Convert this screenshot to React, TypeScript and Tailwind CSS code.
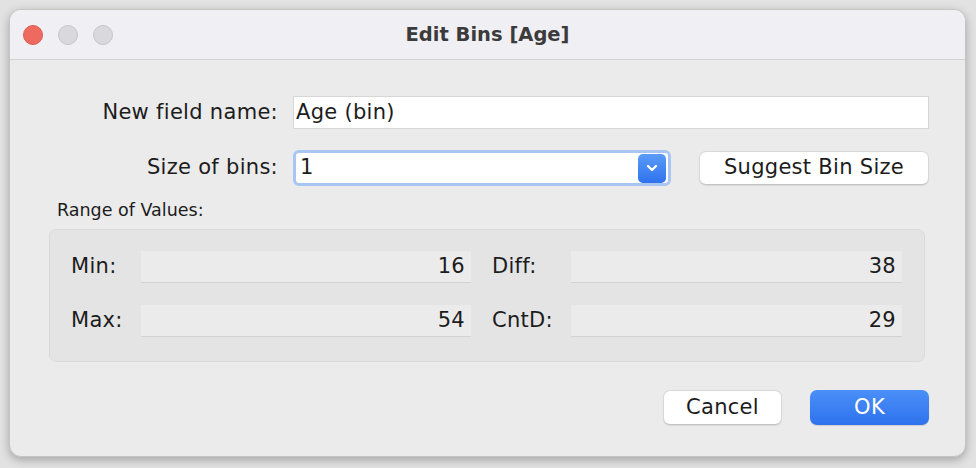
import { ChevronDown } from "lucide-react";

const font = { fontFamily: '"DejaVu Sans", "Liberation Sans", sans-serif' };

function ReadOnlyField({ value }: { value: string }) {
  return (
    <div className="flex h-[33px] flex-1 items-center justify-end rounded-[2px] border border-[#e4e4e4] border-b-[#d2d2d2] bg-[#ebebeb] pr-[6px] text-[21px] text-[#1c1c1c]">
      {value}
    </div>
  );
}

function StatRow({
  left,
  leftValue,
  right,
  rightValue,
}: {
  left: string;
  leftValue: string;
  right: string;
  rightValue: string;
}) {
  return (
    <div className="flex items-center">
      <span className="w-[69px] text-[21px] text-[#1c1c1c]">{left}</span>
      <div className="flex w-[332px]">
        <ReadOnlyField value={leftValue} />
      </div>
      <span className="ml-[20px] w-[78px] text-[21px] text-[#1c1c1c]">{right}</span>
      <div className="flex w-[333px]">
        <ReadOnlyField value={rightValue} />
      </div>
    </div>
  );
}

export default function App() {
  return (
    <div
      className="h-[468px] w-[976px] bg-[#e2e2e2] pb-[11px] pl-[9px] pr-[10px] pt-[9px] tracking-[0.3px]"
      style={font}
    >
      <div className="flex h-full w-full flex-col overflow-hidden rounded-[12px] border border-[#c4c4c4] bg-[#ebebeb] shadow-[0_3px_10px_rgba(0,0,0,0.28)]">
        {/* title bar */}
        <div className="relative flex h-[50px] shrink-0 items-center border-b border-[#d3d3d3] bg-[#f0eff4]">
          <div className="ml-[13px] flex gap-[15px]">
            <span className="h-[20px] w-[20px] rounded-full border border-[#dc5a4f] bg-[#ee6a5e]" />
            <span className="h-[20px] w-[20px] rounded-full border border-[#c6c5ca] bg-[#d9d8dd]" />
            <span className="h-[20px] w-[20px] rounded-full border border-[#c6c5ca] bg-[#d9d8dd]" />
          </div>
          <div className="absolute inset-0 flex items-center justify-center text-[19.5px] font-bold tracking-normal text-[#3b3b3b]">
            Edit Bins [Age]
          </div>
        </div>

        {/* body */}
        <div className="flex flex-1 flex-col pl-[39px] pr-[36px] pt-[36px]">
          <div className="flex items-center">
            <span className="w-[229px] text-right text-[21px] text-[#1c1c1c]">
              New field name:
            </span>
            <div className="ml-[15px] flex h-[33px] flex-1 items-center border border-[#d6d6d6] bg-white pl-[2px] text-[21px] text-[#1c1c1c]">
              Age (bin)
            </div>
          </div>

          <div className="mt-[21px] flex items-center">
            <span className="w-[229px] text-right text-[21px] text-[#1c1c1c]">
              Size of bins:
            </span>
            <div className="ml-[15px] flex h-[36px] w-[378px] items-center rounded-[6px] border-[3px] border-[#a9c6f3] bg-white pl-[4px] pr-[2px] text-[21px] text-[#1c1c1c]">
              <span className="flex-1">1</span>
              <span className="flex h-[29px] w-[28px] items-center justify-center rounded-[5px] bg-gradient-to-b from-[#5a9bf8] to-[#2f72ee]">
                <ChevronDown size={16} strokeWidth={3.5} color="#ffffff" />
              </span>
            </div>
            <button className="ml-[28px] flex h-[34px] flex-1 items-center justify-center rounded-[7px] border border-[#d8d8d8] border-b-[#c4c4c4] bg-white text-[21px] text-[#1c1c1c] shadow-[0_1px_1px_rgba(0,0,0,0.08)]">
              Suggest Bin Size
            </button>
          </div>

          <div className="ml-[8px] mt-[11px] text-[17.5px] tracking-normal text-[#1c1c1c]">Range of Values:</div>

          <div className="mr-[4px] mt-[6px] flex flex-col gap-[21px] rounded-[7px] border border-[#dadada] bg-[#e4e4e4] pb-[24px] pl-[21px] pr-[21px] pt-[20px]">
            <StatRow left="Min:" leftValue="16" right="Diff:" rightValue="38" />
            <StatRow left="Max:" leftValue="54" right="CntD:" rightValue="29" />
          </div>

          <div className="mt-[28px] flex justify-end gap-[28px]">
            <button className="h-[35px] w-[119px] rounded-[7px] border border-[#d8d8d8] border-b-[#c4c4c4] bg-white text-[21px] text-[#1c1c1c] shadow-[0_1px_1px_rgba(0,0,0,0.08)]">
              Cancel
            </button>
            <button className="h-[35px] w-[119px] rounded-[7px] bg-gradient-to-b from-[#4b8ff8] to-[#2e72ee] text-[21px] text-white shadow-[0_1px_1px_rgba(0,0,0,0.12)]">
              OK
            </button>
          </div>
        </div>
      </div>
    </div>
  );
}
